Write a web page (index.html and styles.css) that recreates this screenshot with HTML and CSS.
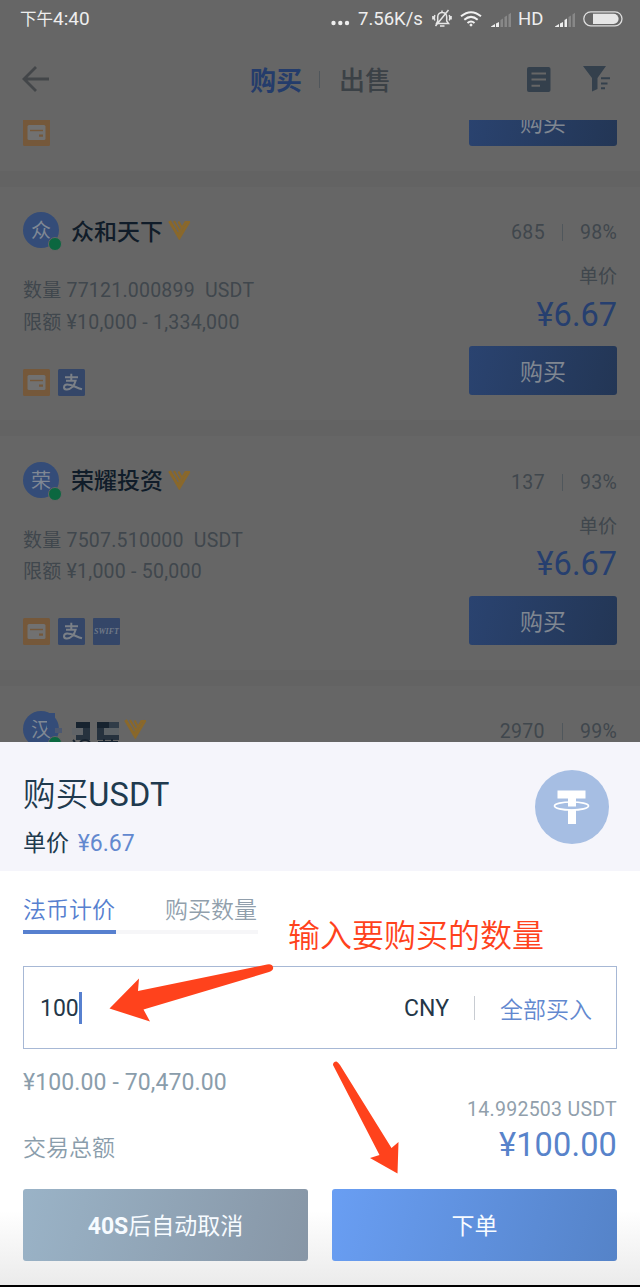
FILE: index.html
```html
<!DOCTYPE html>
<html lang="zh-CN">
<head>
<meta charset="utf-8">
<title>购买USDT</title>
<link rel="stylesheet" href="styles.css">
</head>
<body>
<svg width="0" height="0" class="defs">
  <symbol id="card" viewBox="0 0 27 27"><rect width="27" height="27" rx="1.500" fill="#75583a"/><rect x="4.500" y="6" width="18" height="15" rx="1.500" fill="#717171"/><path d="M7 11.500h13" stroke="#75583a" stroke-width="1.400"/><rect x="16" y="15.500" width="4" height="2.200" fill="#75583a"/></symbol>
  <symbol id="alipay" viewBox="0 0 27 27"><rect width="27" height="27" rx="1.500" fill="#344668"/><g fill="none" stroke="#7b8087" stroke-width="2"><path d="M7 8.200h13M13.300 4.800v6.900M8 11.800h9.600C16.500 16.500 12.500 21 8.300 20.500C5 20 5.300 16 9 15.600C13 15.300 18 18.500 24 20.300"/></g></symbol>
  <symbol id="vip" viewBox="0 0 23 20"><g fill="none" stroke="#8a682a"><path d="M1.500 1L11.300 17.500L21 1.500" stroke-width="3"/><path d="M6 1L12 11.500M10.500 1.500L14 8M10.500 14L17.500 2H22" stroke-width="2.200"/></g></symbol>
  <symbol id="signal" viewBox="0 0 22 16"><path d="M0 14.500L4 12v3H0z" fill="#eee"/><path d="M5 11.500l3-1.500v5H5z" fill="#eee"/><path d="M9.500 8L12 6.500V15H9.500z"/><path d="M13.500 5L16 3.500V15h-2.500zM17.500 2.500L20 .8V15h-2.500z" fill="#888"/></symbol>
</svg>
<div class="screen">
  <header class="status">
    <span class="clock"><span class="cjk">下午</span>4:40</span>
    <svg class="dots" width="19" height="6" viewBox="0 0 19 6" fill="#eee"><circle cx="2.500" cy="3" r="2.200"/><circle cx="9.300" cy="3" r="2.200"/><circle cx="16" cy="3" r="2.200"/></svg>
    <span class="speed">7.56K/s</span>
    <svg class="bell" width="20" height="20" viewBox="0 0 20 20" fill="none" stroke="#e6e6e6" stroke-width="1.500"><path d="M4.500 14.500h12l-1.800-2.500V8c0-6-9-6-9 0v4zM8 17h4.500M10 1.500v1.700M2.800 6q-1 3 0 5.500M17.300 6q1 3 0 5.500M.9 7v3.500M19.100 7v3.500M16.500 1L3.500 17"/></svg>
    <svg class="wifi" width="22" height="16" viewBox="0 0 22 16" fill="none" stroke="#f1f1f1" stroke-width="2"><path d="M1 5.300q10-8.200 20 0M4.300 8.700q6.700-5.700 13.400 0M7.500 12q3.500-3 7 0"/><circle cx="11" cy="14" r="1" fill="#fff" stroke-width="1"/></svg>
    <svg class="sig one" width="22" height="16"><use href="#signal"/></svg>
    <span class="hd">HD</span>
    <svg class="sig two" width="22" height="16"><use href="#signal"/></svg>
    <svg class="battery" width="40" height="16" viewBox="0 0 40 16"><rect x=".8" y=".8" width="38.200" height="14" rx="7" fill="none" stroke="#ddd" stroke-width="1.300"/><path d="M10 2.700h20.500a5.100 5.100 0 0 1 0 10.200H10z" fill="#e6e6e6"/></svg>
  </header>
  <nav class="nav">
    <svg class="back" width="28" height="26" viewBox="0 0 28 26" fill="none" stroke="#434649" stroke-width="2.800"><path d="M14 1L2 13l12 12M2 13h25"/></svg>
    <span class="nav-buy">购买</span><i class="nav-line"></i><span class="nav-sell">出售</span>
    <svg class="doc" width="24" height="25" viewBox="0 0 24 25"><rect width="23.500" height="25" rx="2" fill="#34404c"/><path d="M4.500 6.500h14.500M4.500 12.500h14.500M4.500 18.700h8.500" stroke="#666" stroke-width="2"/></svg>
    <svg class="filter" width="28" height="26" viewBox="0 0 28 26" fill="#34404c"><path d="M0 0h23l-8.500 12v11L9 25.500V12z"/><path d="M18 12.300h9M18 17.500h6.500M18 22.300h4" stroke="#34404c" stroke-width="2"/></svg>
  </nav>
  <main class="list">
    <section class="card cut">
      <svg width="27" height="27"><use href="#card"/></svg>
      <div class="buy">购买</div>
    </section>
    <section class="card">
      <div class="top"><div class="avatar">众<i></i></div><b class="name">众和天下</b><svg class="vip" width="23" height="20"><use href="#vip"/></svg><span class="stats">685<i></i>98%</span></div>
      <div class="body">
        <div class="left">
          <p class="amount"><span class="cjk">数量</span> 77121.000899&nbsp; USDT</p>
          <p class="limit"><span class="cjk">限额</span> ¥10,000 - 1,334,000</p>
          <div class="pays"><svg width="27" height="27"><use href="#card"/></svg><svg width="27" height="27"><use href="#alipay"/></svg></div>
        </div>
        <div class="right"><span class="unit">单价</span><span class="price">¥6.67</span><div class="buy">购买</div></div>
      </div>
    </section>
    <section class="card">
      <div class="top"><div class="avatar">荣<i></i></div><b class="name">荣耀投资</b><svg class="vip" width="23" height="20"><use href="#vip"/></svg><span class="stats">137<i></i>93%</span></div>
      <div class="body">
        <div class="left">
          <p class="amount"><span class="cjk">数量</span> 7507.510000&nbsp; USDT</p>
          <p class="limit"><span class="cjk">限额</span> ¥1,000 - 50,000</p>
          <div class="pays"><svg width="27" height="27"><use href="#card"/></svg><svg width="27" height="27"><use href="#alipay"/></svg><span class="swift">SWIFT</span></div>
        </div>
        <div class="right"><span class="unit">单价</span><span class="price">¥6.67</span><div class="buy">购买</div></div>
      </div>
    </section>
    <section class="card">
      <div class="top"><div class="avatar">汉<i></i><svg class="blocks" width="15" height="24" viewBox="0 0 15 24"><path d="M0 0h8v15H0z" fill="#344c78"/><path d="M8 15h7v5H8z" fill="#4c5870"/></svg></div>
        <svg class="mosaic" width="47" height="24" viewBox="0 0 47 24"><path d="M4 2h14v6H4zM25 2h12v6H25z" fill="#17232f"/><path d="M37 2h10v6H37z" fill="#303c48"/><path d="M0 8h11v7H0z" fill="#606468"/><path d="M11 8h7v7h-7zM25 8h7v7h-7z" fill="#26323e"/><path d="M32 8h15v7H32z" fill="#5c6266"/><path d="M4 15h14v5H4zM25 15h22v5H25z" fill="#26323e"/><path d="M1 20l2 2M8 22q5-4 10 0M26 22h20M32 19v5M40 19v5" fill="none" stroke="#17232f" stroke-width="1.800"/></svg>
        <svg class="vip" width="23" height="20"><use href="#vip"/></svg><span class="stats">2970<i></i>99%</span></div>
    </section>
  </main>
  <section class="sheet">
    <div class="sheet-head">
      <div><h1><span class="thin">购买</span>USDT</h1><p><span>单价</span> <em>¥6.67</em></p></div>
      <svg class="coin" width="74" height="74" viewBox="0 0 74 74"><circle cx="37" cy="37" r="37" fill="#a6bee3"/><ellipse cx="36.500" cy="36" rx="17" ry="4" fill="none" stroke="#fff" stroke-width="1.700"/><path d="M22.500 20.500H50.500V28.500H41V36.500H33V28.500H22.500zM33 39.500H41V54H33z" fill="#fff"/></svg>
    </div>
    <div class="sheet-body">
      <div class="tabs"><span class="tab on">法币计价</span><span class="gap"></span><span class="tab">购买数量</span></div>
      <div class="field"><span class="value">100</span><i class="caret"></i><span class="cny">CNY</span><i class="sep"></i><span class="all">全部买入</span></div>
      <p class="range">¥100.00 - 70,470.00</p>
      <div class="total"><span class="total-label">交易总额</span><div class="sum"><span class="usdt">14.992503 USDT</span><span class="cost">¥100.00</span></div></div>
      <div class="actions"><div class="cancel"><b>40S</b>后自动取消</div><div class="order">下单</div></div>
    </div>
    <div class="note">输入要购买的数量</div>
    <svg class="arrows" width="640" height="543" viewBox="0 742 640 543" fill="#ff421c"><path d="M109.500 1008.500L139 978.500L138 991L267 964.500Q272 963.500 273 967Q274 970 269 972L143.500 1009.500L150 1021.500Z"/><path d="M333 1065Q333 1061.500 336.500 1061.500Q338 1062 340 1065L391.500 1148L398.500 1142L397.500 1173.500L370 1158L379.500 1155Z"/></svg>
  </section>
</div>
</body>
</html>
```
FILE: styles.css
```css
* { box-sizing: border-box; margin: 0; padding: 0; }
body { background: #000; }
svg { display: block; flex: none; }
.defs { position: absolute; }
.screen { width: 640px; height: 1287px; overflow: hidden; display: flex; flex-direction: column; background: #666; border-bottom: 2px solid #000; font-family: Roboto, "Noto Sans CJK SC", sans-serif; white-space: nowrap; }

.status { height: 38px; flex: none; display: flex; align-items: center; padding: 0 16px 1px 20px; color: #eee; font-size: 18.5px; line-height: 24px; }
.clock { width: 311px; font-size: 19px; padding-top: 1px; }
.clock .cjk { font-size: 16.5px; }
.dots { margin-top: 9px; }
.speed { width: 66px; margin-left: 8px; }
.bell { margin-left: 8px; }
.wifi { margin-left: 8px; }
.sig { margin-top: 2px; }
.sig.one { margin-left: 9px; fill: #888; }
.hd { width: 27px; margin-left: 5px; }
.sig.two { margin-left: 10px; fill: #eee; }
.battery { margin-left: 6px; }

.nav { height: 82px; flex: none; display: flex; align-items: center; padding: 0 29px 0 22px; }
.back { margin-right: 200px; }
.nav-buy, .nav-sell { width: 52px; font-size: 26px; line-height: 34px; font-weight: 500; color: #243c6b; padding-top: 3px; }
.nav-buy { font-weight: 700; }
.nav-sell { color: #3b4146; }
.nav-line { width: 1px; height: 17px; background: #50565b; margin: 0 19px 0 17px; }
.doc { margin-left: 136px; }
.filter { margin-left: 32px; }

.list { height: 622px; flex: none; overflow: hidden; display: flex; flex-direction: column; }
.card { height: 249.5px; flex: none; padding: 25.5px 23px 0; border-bottom: 16.5px solid #636363; background: #666; }
.card.cut { height: 66.5px; padding-top: 0; display: flex; justify-content: space-between; align-items: flex-end; padding-bottom: 24.5px; overflow: hidden; }
.top { display: flex; height: 36px; align-items: center; }
.avatar { position: relative; width: 36px; height: 36px; border-radius: 50%; background: #344c78; color: #808894; font-size: 20px; line-height: 38px; text-align: center; }
.avatar > i { position: absolute; right: -3px; bottom: -3px; width: 14px; height: 14px; border-radius: 50%; background: #0b6740; border: 1px solid #666; }
.name { margin-left: 12px; font-size: 23px; line-height: 30px; font-weight: 500; color: #101c29; padding-top: 5px; }
.vip { margin-left: 5px; }
.stats { margin-left: auto; display: flex; align-items: center; font-size: 19.5px; letter-spacing: .3px; color: #40474d; padding-top: 5px; }
.stats i { width: 1px; height: 17px; background: #50575c; margin: 0 17px; }
.body { display: flex; justify-content: space-between; }
.left { color: #40474d; font-size: 19.5px; padding-top: 27px; }
.left p { height: 31.5px; line-height: 31px; }
.left .cjk { font-size: 19px; }
.amount { letter-spacing: .22px; }
.limit { letter-spacing: .25px; }
.pays { display: flex; gap: 8px; margin-top: 30.5px; }
.swift { width: 27px; height: 27px; background: #344668; border-radius: 1px; color: #707987; font: italic 700 8px/27px "Liberation Serif", serif; text-align: center; }
.right { width: 147px; display: flex; flex-direction: column; align-items: flex-end; padding-top: 16px; }
.unit { font-size: 19px; line-height: 26px; color: #40474d; }
.price { font-size: 32.5px; line-height: 38px; color: #263f6f; margin-top: 5.5px; }
.buy { width: 148px; height: 49px; flex: none; margin-top: 12.5px; border-radius: 3px; background: linear-gradient(105deg, #2a4370, #233655); color: #808791; font-size: 23px; line-height: 53px; text-align: center; }
.mosaic { margin: 5px 0 0 13px; }
.blocks { position: absolute; left: 24px; top: 2px; }

.sheet { position: relative; height: 543px; flex: none; display: flex; flex-direction: column; background: #fff; color: #203a4e; }
.sheet-head { height: 129px; background: #f5f5fb; display: flex; justify-content: space-between; padding: 28px 31px 0 23px; }
.sheet-head h1 { font-size: 32.5px; line-height: 46px; font-weight: 400; letter-spacing: .15px; padding-top: 2px; }
.thin { font-weight: 350; }
.sheet-head p { font-size: 23px; line-height: 32px; margin-top: 10px; }
.sheet-head em { font-style: normal; color: #6288cf; margin-left: 3px; }
.sheet-body { flex: 1; padding: 22px 23px 0; background: linear-gradient(#fff 82%, #ebebeb); }
.tabs { display: flex; font-size: 23px; line-height: 36px; font-weight: 350; color: #919fac; }
.tab { width: 93px; height: 41px; border-bottom: 4px solid #f6f6f8; }
.tab.on { color: #5780cf; border-color: #5780cf; }
.gap { width: 49px; border-bottom: 4px solid #f6f6f8; }
.field { height: 83px; margin-top: 32px; border: 1px solid #a7b8d5; display: flex; align-items: center; padding: 0 24px 0 16px; font-size: 23px; background: #fff; }
.value, .cny { color: #243748; padding-top: 2px; }
.caret { width: 3px; height: 32px; background: #5780cf; margin: 0 auto 0 0; }
.sep { width: 1px; height: 24px; background: #c8ccd2; margin: 0 25px; }
.all { color: #6288cf; font-weight: 350; }
.range { margin-top: 17px; font-size: 23px; line-height: 34px; height: 34px; color: #8a9dab; letter-spacing: .12px; }
.total { height: 89px; display: flex; justify-content: space-between; }
.total-label { padding-top: 32px; font-size: 23px; line-height: 34px; font-weight: 350; color: #8a9dab; }
.sum { display: flex; flex-direction: column; align-items: flex-end; }
.usdt { font-size: 19.5px; line-height: 24px; color: #919fac; letter-spacing: .28px; margin-top: -2px; }
.cost { font-size: 32.5px; line-height: 38px; color: #5883ca; margin-top: 4px; letter-spacing: .15px; }
.actions { display: flex; gap: 24px; }
.cancel, .order { width: 285px; height: 72px; border-radius: 3px; color: #f7fbff; font-size: 23px; line-height: 75px; text-align: center; background: linear-gradient(105deg, #9ab3c7, #8796a6); }
.order { background: linear-gradient(105deg, #699ef3, #5583c8); }
.cancel b { font-weight: 700; }
.note { position: absolute; left: 288px; top: 172px; font-size: 32px; line-height: 44px; font-weight: 350; color: #ff421c; }
.arrows { position: absolute; left: 0; top: 0; }
```
